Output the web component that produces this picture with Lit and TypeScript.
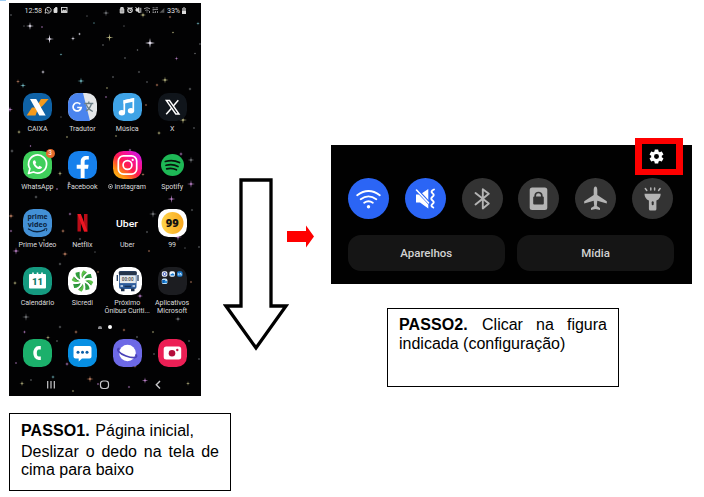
import { LitElement, html, svg, css, nothing } from "lit";
import { customElement, property } from "lit/decorators.js";

const tile = (fill: string) => svg`<rect width="29" height="28" rx="10.5" fill=${fill}></rect>`;

const icons: Record<string, unknown> = {
  caixa: svg`${tile("#0f62a6")}
    <path d="M18 6h7.600000L20 12.500000L14.500000 17L12.500000 22.500000H3.700000L9 14.500000H13z" fill="#f59a1c"/>
    <path d="M7 6h6.200000L16.200000 11L17.500000 13.500000L22.700000 22.500000H16.300000L12.500000 15.500000L11.200000 13.500000z" fill="#fff"/>`,
  translate: svg`${tile("#e4e6e8")}
    <path d="M10.500000 0H15L22 28H10.500000A10.500000 10.500000 0 0 1 0 17.500000v-7A10.500000 10.500000 0 0 1 10.500000 0z" fill="#4a84ee"/>
    <path d="M12.300000 11.200000A4.100000 4.100000 0 1 0 13.200000 14.500000H9.200000" fill="none" stroke="#fff" stroke-width="1.700000"/>
    <path d="M16.300000 10.500000h9M20.800000 8.500000v2M23.500000 10.500000c-.8 3.500000-3 6-5.500000 7.500000M18.300000 11.500000c1 3 3.500000 5.500000 6.500000 7" fill="none" stroke="#6d7f86" stroke-width="1.300000"/>`,
  music: svg`${tile("#3fa3e6")}
    <path d="M11.300000 19.500000V8l9-2v11.500000" fill="none" stroke="#fff" stroke-width="1.700000"/>
    <path d="M10.500000 7.300000L21.100000 5v3.500000L10.500000 10.800000z" fill="#fff"/>
    <ellipse cx="8.900000" cy="19.800000" rx="3.200000" ry="2.700000" fill="#fff"/>
    <ellipse cx="18" cy="17.800000" rx="3.200000" ry="2.700000" fill="#fff"/>`,
  x: svg`${tile("#10151b")}
    <path d="M8.300000 7.500000h3.200000l9.500000 13.500000h-3.200000z" fill="#10151b" stroke="#fff" stroke-width="1.400000"/>
    <path d="M20.300000 7.300000l-5 5.700000M13.500000 15.300000l-5.300000 6" stroke="#fff" stroke-width="1.500000"/>`,
  whatsapp: svg`${tile("#3fcf5b")}
    <path d="M5.500000 22.500000l1.400000-4.800000A9 9 0 1 1 10.500000 21z" fill="none" stroke="#fff" stroke-width="1.700000" stroke-linejoin="round"/>
    <path d="M11 9.200000c-2.200000 1.500000-.8 4.500000 1 6.500000s5 3.500000 6.800000 1.300000c.5-.9.2-1.200000-2.300000-2.300000l-1.300000 1.200000c-1.500000-.7-2.300000-1.600000-2.900000-2.800000l.9-1.300000-1-2.400000z" fill="#fff"/>`,
  facebook: svg`${tile("#1680ec")}
    <path d="M12.700000 27V17.700000H8.700000v-4h4v-3c0-3.800000 2.400000-5.600000 5.500000-5.600000h2.600000v3.500000h-2c-1.700000 0-2.200000.8-2.200000 2.200000v2.900000h4l-.6 4h-3.400000V27z" fill="#fff"/>`,
  instagram: svg`<defs>
      <linearGradient id="ig" x1="0" y1="1" x2=".9" y2="0">
        <stop offset="0" stop-color="#ffd21c"/><stop offset=".25" stop-color="#ff8a12"/>
        <stop offset=".5" stop-color="#ff1c4c"/><stop offset=".75" stop-color="#f510a0"/>
        <stop offset="1" stop-color="#c21df0"/>
      </linearGradient></defs>${tile("url(#ig)")}
    <rect x="5.300000" y="4.900000" width="18.400000" height="18.200000" rx="5.200000" fill="none" stroke="#fff" stroke-width="1.700000"/>
    <circle cx="14.500000" cy="14" r="4.400000" fill="none" stroke="#fff" stroke-width="1.700000"/>
    <circle cx="19.700000" cy="8.900000" r="1.100000" fill="#fff"/>`,
  spotify: svg`<ellipse cx="14.500000" cy="14" rx="11.500000" ry="11" fill="#1eb856"/>
    <path d="M7.300000 10.500000c4.500000-1.400000 10-1 14.200000 1.100000M8 14.300000c4-1.100000 8.500000-.7 12 1.200000M8.700000 17.800000c3.300000-.8 6.800000-.5 9.700000 1" fill="none" stroke="#07140b" stroke-width="1.700000" stroke-linecap="round"/>`,
  prime: svg`${tile("#4390d6")}
    <text x="14.500000" y="10.200000" class="prime" textLength="20" lengthAdjust="spacingAndGlyphs">prime</text>
    <text x="14.500000" y="17.500000" class="prime" textLength="19.500000" lengthAdjust="spacingAndGlyphs">video</text>
    <path d="M5.500000 20c5 3.300000 11 3.300000 16 .8" fill="none" stroke="#0b2340" stroke-width="1.300000" stroke-linecap="round"/>
    <path d="M21.300000 19.700000h2.700000l-.7 2.500000" fill="none" stroke="#0b2340" stroke-width=".8"/>`,
  netflix: svg`<path d="M9.500000 5h3.400000v17.500000H9.500000zM16 5h3.500000v17.500000H16z" fill="#b90d18"/>
    <path d="M9.500000 5h3.400000l6.600000 17.500000H16z" fill="#ee1622"/>`,
  uber: svg`<text x="14" y="17.500000" class="uber" textLength="22" lengthAdjust="spacingAndGlyphs">Uber</text>`,
  n99: svg`${tile("#fff")}
    <defs><linearGradient id="g99"><stop offset="0" stop-color="#ffd44a"/><stop offset="1" stop-color="#f8a820"/></linearGradient></defs>
    <circle cx="14.500000" cy="14" r="11" fill="url(#g99)"/>
    <text x="14.300000" y="17.700000" class="n99">99</text>`,
  calendar: svg`${tile("#159a80")}
    <path d="M7 7h2.200000V5.500000h1.600000V7h2.900000V5.500000h1.600000V7h2.900000V5.500000h1.600000V7H22q1 0 1 1v12.500000q0 1-1 1H7q-1 0-1-1V8q0-1 1-1z" fill="#fff"/>
    <text x="14.500000" y="17.900000" class="cal">11</text>`,
  sicredi: svg`${tile("#fff")}
    ${[0, 45, 90, 135, 180, 225, 270, 315].map(
      (a, i) => svg`<path transform="rotate(${a} 14.5 14)" d="M14.200000 11.200000C12.800000 8.500000 13.300000 5 15.500000 3.200000L19 5.300000C17 6.300000 15.500000 8.500000 14.200000 11.200000z" fill=${i % 2 ? "#2f9e3c" : "#5cc24a"}/>
      <path transform="rotate(${a} 14.5 14)" d="M14.200000 11.200000C14.700000 8.300000 16.500000 6.200000 19 5.300000L18 6.300000C16.500000 7.300000 15 9 14.200000 11.200000z" fill="#12612f"/>`
    )}`,
  bus: svg`${tile("#fff")}
    <rect x="6" y="4" width="17.500000" height="18" rx="2" fill="#2f5d9c"/>
    <rect x="5.800000" y="4.300000" width="18" height="3.600000" rx="1.200000" fill="#26354a"/>
    <rect x="6.800000" y="8.300000" width="16" height="7.800000" fill="#e8ebec"/>
    <path d="M4.300000 8v6M25 8v6" stroke="#203858" stroke-width="1.300000"/>
    <path d="M8 21.500000h3.500000v2.700000H8zM18 21.500000h3.500000v2.700000H18z" fill="#20324d"/>
    <path d="M7.500000 19h2.500000M19.500000 19H22" stroke="#dbe6f2" stroke-width="1.300000"/>
    <path d="M11.500000 19.500000h6.500000" stroke="#173156" stroke-width="1.500000"/>
    <text x="14.700000" y="13.800000" class="bus">00:00</text>`,
  folder: svg`${tile("#1c1d21")}
    <rect x="3.800000" y="4.300000" width="5.600000" height="5.400000" rx="1.800000" fill="#eef3fb"/>
    <circle cx="6.600000" cy="7" r="1.500000" fill="none" stroke="#3a55b8" stroke-width="1"/>
    <rect x="11.400000" y="4.300000" width="5.600000" height="5.400000" rx="1.800000" fill="#eef6fd"/>
    <path d="M12.300000 8.500000q0-1.700000 1.500000-1.700000.7-1.300000 1.900000 0 1 .5.6 1.700000z" fill="#1678d0"/>
    <rect x="19" y="4.300000" width="5.600000" height="5.400000" rx="1.600000" fill="#1779cc"/>
    <path d="M20.400000 6.200000v2.200000M22 8.400000V6.300000q1.500000-.3 1.400000 2.100000" stroke="#fff" stroke-width=".7" fill="none"/>
    <rect x="3.800000" y="11.600000" width="5.600000" height="5.400000" rx="1.600000" fill="#bfe0fa"/>
    <rect x="4.200000" y="13" width="3" height="3" fill="#0c62b8"/><rect x="6.500000" y="14" width="2.500000" height="2" fill="#2a8fe0"/>`,
  phone: svg`${tile("#1bb06b")}
    <path d="M17.800000 8.700000h-2c-5 0-5 10.600000 0 10.600000h2" fill="none" stroke="#fff" stroke-width="3.500000" stroke-linejoin="round"/>`,
  messages: svg`${tile("#078fe3")}
    <path d="M7.500000 7h14q2 0 2 2v8.500000q0 2-2 2H14l-3.300000 3v-3H7.500000q-2 0-2-2V9q0-2 2-2z" fill="#fff"/>
    <g fill="#0a5ea8"><circle cx="10" cy="13.200000" r="1.500000"/><circle cx="14.500000" cy="13.200000" r="1.500000"/><circle cx="19" cy="13.200000" r="1.500000"/></g>`,
  internet: svg`${tile("#6d69e6")}
    <circle cx="14.500000" cy="14" r="8.300000" fill="#fff"/>
    <path d="M6.500000 9.500000C2.500000 10 6 14.500000 13 17s13 2 9.500000-1.500000" fill="none" stroke="#4a43b8" stroke-width="1.800000"/>`,
  camera: svg`${tile("#ec1f55")}
    <rect x="5.700000" y="7.500000" width="17.500000" height="13" rx="2.500000" fill="#fff"/>
    <circle cx="14" cy="14.200000" r="3.300000" fill="#b40d3b"/><circle cx="19.300000" cy="11" r="1.200000" fill="#c81a48"/>`,
};

interface App { icon: string; label: string[]; badge?: string; check?: boolean; }

const apps: App[] = [
  { icon: "caixa", label: ["CAIXA"] },
  { icon: "translate", label: ["Tradutor"] },
  { icon: "music", label: ["Música"] },
  { icon: "x", label: ["X"] },
  { icon: "whatsapp", label: ["WhatsApp"], badge: "3" },
  { icon: "facebook", label: ["Facebook"] },
  { icon: "instagram", label: ["Instagram"], check: true },
  { icon: "spotify", label: ["Spotify"] },
  { icon: "prime", label: ["Prime Video"] },
  { icon: "netflix", label: ["Netflix"] },
  { icon: "uber", label: ["Uber"] },
  { icon: "n99", label: ["99"] },
  { icon: "calendar", label: ["Calendário"] },
  { icon: "sicredi", label: ["Sicredi"] },
  { icon: "bus", label: ["Próximo", "Ônibus Curiti..."] },
  { icon: "folder", label: ["Aplicativos", "Microsoft"] },
];
const dock = ["phone", "messages", "internet", "camera"];

const W = "#e8e4f2", G = "#77797d", Y = "#b5b27f", C = "#6fb4bd", P = "#b77fc4", O = "#c08062";
const stars: [number, number, number, string][] = [
  [30, 26, 4, W], [49.5, 39, 4.5, W], [73, 38.5, 2.6, W], [79.5, 34, 1.8, W], [109.5, 37.5, 4, Y], [150, 43, 5, W],
  [106, 13, 3.5, G], [143, 15, 3, Y], [170, 17, 1.6, O], [198, 23.5, 2, C], [94, 23, 1, C], [42, 27, 1.2, P], [61, 54.5, 1.5, C],
  [43, 72, 2.4, W], [18, 81.5, 2.4, O], [23, 85.5, 3, C], [81, 81, 3.6, C], [103, 45, 1.3, G], [125, 58, 1.3, G], [137.5, 50, 1.3, G],
  [176.5, 58.5, 2.2, P], [165, 80, 3.6, Y], [139, 72, 1.5, G], [147, 82, 1.2, G], [157, 85, 2, O], [173, 32.5, 1.3, Y], [195, 53.5, 1.2, G],
  [11, 15, 1.2, G], [87, 16, 1, G], [190, 89, 2, G], [124, 26, 1, G], [113, 77, 1.4, G], [200, 44, 1.4, G], [24, 26, 1, G],
  [106, 97, 1.3, P], [61, 117, 1, G], [10, 109.5, 3, P], [183, 120, 4, Y], [19, 132, 2.6, Y], [146, 105, 1.4, O], [67, 137, 1.4, Y],
  [159, 133, 2.6, Y], [194, 128, 1.3, G], [116, 136, 1.3, Y], [107, 88, 1.3, Y], [12, 151, 2.4, G], [30.5, 146, 1.2, P],
  [60, 173.5, 2.8, Y], [191, 160, 3.4, G], [181, 154, 2.4, P], [191, 184, 4, P], [171.5, 199, 4, P], [143, 174.5, 2, O], [130, 150, 1.8, P],
  [36, 197, 2.2, G], [57, 189, 1.3, P], [69, 183, 2, W], [11, 216, 3, O], [70, 214, 2, P], [11, 231, 1.7, P], [63, 231, 2.6, O],
  [16, 251, 3.8, P], [65, 254, 3, O], [153, 214, 4, G], [178, 237, 4, P], [147, 232, 1.4, G], [192, 210, 1.5, G], [199, 247, 1.4, G],
  [95, 252, 1, G], [185, 248, 1, G], [149, 251, 1.4, O], [15, 283, 2.6, Y], [60, 264, 2, G], [26, 317, 4, G], [98, 272, 1.4, O],
  [140, 296, 3, P], [178, 319, 3, G], [60, 327, 2, G], [191, 282, 1.4, O], [24.5, 332, 2, P], [48, 337.5, 2.6, Y], [76, 332, 2.4, O],
  [57, 341, 1.3, G], [124, 330, 2, O], [153, 332, 1.4, Y], [137, 337, 1.4, G], [189, 341, 1.4, G], [154, 354, 1.3, G], [67, 364, 2.4, P],
  [135, 366, 2.4, O], [16, 363, 1.2, P], [22, 383.5, 2.8, Y], [53, 377, 2.2, C], [90, 379, 3.6, O], [129, 387, 1.5, P], [145, 380.5, 3.2, P],
  [188, 383.5, 2.4, Y], [73, 391, 1.5, Y], [31, 380, 1.3, G], [98, 384, 1.4, P], [199, 359, 1.3, G], [44, 240, 1.6, Y], [80, 239, 1.5, G],
];

@customElement("phone-home")
export class PhoneHome extends LitElement {
  static styles = css`
    :host { display: flex; flex-direction: column; position: relative; background: #020203; height: 393px; overflow: hidden;
      font-family: Roboto, sans-serif; color: #dcdcde; }
    .sky { position: absolute; inset: 0; width: 192px; height: 393px; }
    .status { position: relative; display: flex; justify-content: space-between; align-items: center; height: 14px;
      padding: 0 15px 0 15.5px; font-size: 7.200000px; letter-spacing: -0.1px; }
    .status div { display: flex; align-items: center; gap: 2px; }
    .status svg { display: block; }
    .apps { position: relative; display: grid; grid-template-columns: repeat(4, 44.9px); grid-auto-rows: 58px; margin: 76px 0 0 6px; }
    .app { display: flex; flex-direction: column; align-items: center; position: relative; }
    .icon { width: 29px; height: 28px; display: block; flex: none; overflow: visible; }
    .label { margin-top: 3.5px; font-size: 7.1px; line-height: 8px; text-align: center; white-space: nowrap; letter-spacing: -0.05px; }
    .badge { position: absolute; left: 30.5px; top: -2.5px; width: 9px; height: 9px; border-radius: 50%; background: #e66a2c;
      color: #fff; font-size: 6.5px; line-height: 9px; text-align: center; }
    .check { width: 5px; height: 5px; margin-right: 1px; }
    .dots { position: relative; display: flex; gap: 6px; align-items: center; height: 6px; margin: -1px 0 0 89px; }
    .home { width: 4px; height: 3px; background: #8b8b8f; border-radius: 2px 2px 0 0; }
    .dot { width: 4px; height: 4px; border-radius: 50%; background: #fff; }
    .dock { position: relative; display: grid; grid-template-columns: repeat(4, 44.9px); justify-items: center; margin: 9px 0 0 6px; }
    .nav { position: relative; display: flex; margin-top: 13px; padding-left: 37px; }
    .prime { font: 700 7.6px/1 "Open Sans", sans-serif; text-anchor: middle; fill: #0b2340; }
    .uber { font: 500 9.800000px Roboto, sans-serif; text-anchor: middle; fill: #fff; }
    .n99 { font: italic 900 11px "Open Sans", Roboto, sans-serif; font-style: normal; text-anchor: middle; fill: #111; }
    .cal { font: 900 9.500000px Roboto, sans-serif; text-anchor: middle; fill: #137a67; }
    .bus { font: 700 4.600000px Roboto, sans-serif; text-anchor: middle; fill: #555; }
  `;

  private icon(name: string) {
    return html`<svg class="icon" viewBox="0 0 29 28">${icons[name]}</svg>`;
  }

  render() {
    return html`
      <svg class="sky" viewBox="9 3 192 393">
        ${stars.map(([x, y, r, c]) => {
          const k = r * 0.13;
          return svg`<path d="M${x} ${y - r}L${x + k} ${y - k}L${x + r} ${y}L${x + k} ${y + k}L${x} ${y + r}L${x - k} ${y + k}L${x - r} ${y}L${x - k} ${y - k}Z" fill=${c}/>
            <circle cx=${x} cy=${y} r=${0.45 + r * 0.16} fill=${c} opacity=".6"/>`;
        })}
      </svg>
      <div class="status">
        <div>
          <span>12:58</span>
          <svg width="24" height="8" viewBox="0 0 24 8" fill="none" stroke="#ddd" stroke-width=".9">
            <path d="M1 7.200000l.6-1.800000A2.900000 2.900000 0 1 1 2.600000 6.600000z"/><path d="M3 2.800000c0 1.500000 1 2.500000 2.500000 2.400000"/>
            <path d="M10 3.200000L11.500000 1.500000H13V6.500000H10z" fill="#ddd"/>
            <rect x="17.500000" y="1.500000" width="5.500000" height="5"/><path d="M18 5.800000l1.500000-2 1 1 1-.8 1.200000 1.800000z" fill="#ddd"/>
          </svg>
        </div>
        <div>
          <svg width="46" height="8" viewBox="0 0 46 8" fill="none" stroke="#ddd" stroke-width=".9">
            <path d="M1.200000 3h3.600000v4H1.200000zM1.800000 3V1.500000h2.400000V3" fill="#aaa"/>
            <circle cx="11" cy="4.300000" r="2.200000" stroke-width="1.100000"/><path d="M8.500000 2l1-1M13.500000 2l-1-1M11 3v1.500000h1"/>
            <path d="M17 3h1.200000L20 1.500000v5L18.200000 5H17z" fill="#ddd"/><path d="M16.500000 1l4.500000 6M21.800000 1.800000v5"/>
            <path d="M25 2.800000q3-2.200000 6 0M26.300000 4.500000q1.600000-1.200000 3.200000 0M28 5.500000v1M30.500000 5v2" stroke="#a5a5a8"/>
            <path d="M33.500000 1.800000h2M36.500000 1.800000h2.500000M33.500000 3.500000h5.500000M33.500000 5h1.500000M33.500000 6.500000h2M36.500000 5v2M38.500000 5v2" stroke="#b5b5b8" stroke-width=".7"/>
            <path d="M40.500000 6.800000h4.800000V2z" fill="#555" stroke="none"/>
          </svg>
          <span>33%</span>
          <svg width="4" height="7" viewBox="0 0 4 7"><path d="M1.200000 0h1.600000v1H4v2.500000H0V1h1.200000z" fill="#888"/><path d="M0 3.500000h4V7H0z" fill="#ddd"/></svg>
        </div>
      </div>
      <div class="apps">
        ${apps.map((a) => html`<div class="app">
          ${this.icon(a.icon)}
          ${a.badge ? html`<span class="badge">${a.badge}</span>` : nothing}
          <div class="label">${a.check
            ? html`<svg class="check" viewBox="0 0 6 6"><circle cx="3" cy="3" r="2.500000" fill="none" stroke="#ddd" stroke-width=".8"/><path d="M1.700000 2.500000L3 4.500000l1.300000-2z" fill="#ddd"/></svg>`
            : nothing}${a.label.map((l, i) => html`${i ? html`<br>` : nothing}${l}`)}</div>
        </div>`)}
      </div>
      <div class="dots"><i class="home"></i><i class="dot"></i></div>
      <div class="dock">${dock.map((d) => this.icon(d))}</div>
      <div class="nav">
        <svg width="118" height="12" viewBox="0 0 118 12" fill="none" stroke="#c8c8cb" stroke-width="1.200000">
          <path d="M1.700000 1v7.500000M5 1v7.500000M8.300000 1v7.500000" />
          <rect x="54.500000" y="1" width="8" height="7.500000" rx="2.700000"/>
          <path d="M114 1l-3.700000 3.800000 3.700000 3.800000" stroke-width="1.400000"/>
        </svg>
      </div>`;
  }
}

const toggles: { on?: boolean; glyph: unknown }[] = [
  { on: true, glyph: svg`<g fill="none" stroke="#fff" stroke-width="1.900000" stroke-linecap="round"><path d="M9.200000 17.200000q11.300000-8.500000 22.600000 0M12.700000 21.200000q7.800000-5.600000 15.600000 0M16.200000 24.700000q4.300000-2.800000 8.600000 0"/></g><circle cx="20.500000" cy="28.800000" r="1.700000" fill="#fff"/>` },
  { on: true, glyph: svg`<path d="M11 16.500000h4L23.300000 11v19.500000L15 24.500000h-4z" fill="#fff"/><path d="M11.300000 11.300000L24.500000 25.500000" stroke="#2b65f5" stroke-width="3.300000"/><path d="M11.500000 12L23.500000 24.800000" stroke="#fff" stroke-width="1.600000" stroke-linecap="round"/><path d="M29 11.500000q-4 1.700000-1.500000 3.700000 2.500000 1.700000 0 3.500000-2.500000 2 0 3.700000 2.500000 1.800000 0 3.500000-2.500000 2 .8 3.600000" fill="none" stroke="#fff" stroke-width="1.900000" stroke-linecap="round"/>` },
  { glyph: svg`<path d="M13.500000 15l13.300000 10.500000-6 5V11.200000l6 4.500000L13.500000 26.500000" fill="none" stroke="#b4b4b4" stroke-width="1.900000" stroke-linejoin="round" stroke-linecap="round"/>` },
  { glyph: svg`<rect x="11.700000" y="9.500000" width="17.600000" height="22.500000" rx="2.500000" fill="#b4b4b4"/><rect x="15.200000" y="18.500000" width="10.600000" height="8" rx="1" fill="#333"/><path d="M17.200000 19v-1.200000a3.300000 3.300000 0 0 1 6.600000 0V19" fill="none" stroke="#333" stroke-width="1.700000"/>` },
  { glyph: svg`<path d="M20.500000 8.500000c1.200000 0 1.800000 1.800000 1.800000 3.500000v5l9.500000 6.300000v2.200000l-9.500000-2.700000-.5 5.200000 3.200000 2v2l-4.500000-1-4.500000 1v-2l3.200000-2-.5-5.200000-9.500000 2.700000v-2.200000l9.500000-6.300000v-5c0-1.700000.6-3.500000 1.800000-3.500000z" fill="#b4b4b4"/>` },
  { glyph: svg`<path d="M12.500000 15.700000h16.200000q0 4.800000-4.300000 6.800000V31q0 1.500000-1.500000 1.500000h-4.500000q-1.500000 0-1.500000-1.500000v-8.500000q-4.400000-2-4.400000-6.800000z" fill="#b4b4b4"/><rect x="19.700000" y="23.300000" width="2" height="4" rx="1" fill="#333"/><path d="M14.800000 12.500000l-1.500000-2M18.800000 12v-2M22.600000 12v-2M26.600000 12.500000l1.500000-2" stroke="#b4b4b4" stroke-width="1.500000" stroke-linecap="round"/>` },
];

@customElement("quick-panel")
export class QuickPanel extends LitElement {
  static styles = css`
    :host { display: block; position: relative; height: 139px; background: #010101; font-family: Roboto, sans-serif; }
    .toggles { display: flex; justify-content: space-between; padding: 32.500000px 19px 0 17px; }
    .toggle { width: 41px; height: 41px; border-radius: 50%; background: #333; }
    .toggle.on { background: #2b65f5; }
    .toggle svg { display: block; width: 41px; height: 41px; }
    .buttons { display: grid; grid-template-columns: 156.500000px 157px; gap: 12.500000px; padding: 16.500000px 0 0 17px; }
    .button { height: 36px; border-radius: 13px; background: #151515; color: #d2d2d2; font-size: 11.500000px; font-weight: 500;
      line-height: 37px; text-align: center; }
    .mark { position: absolute; left: 304px; top: -7px; width: 48px; height: 37px; box-sizing: border-box; border: 6.500000px solid #fe0000; background: #000;
      border-left-width: 7px; border-right-width: 7px; }
    .gear { position: absolute; left: 317px; top: 3px; width: 17px; height: 17px; }
  `;
  render() {
    return html`
      <div class="toggles">${toggles.map((t) => html`<div class="toggle ${t.on ? "on" : ""}"><svg viewBox="0 0 41 41">${t.glyph}</svg></div>`)}</div>
      <div class="buttons"><div class="button">Aparelhos</div><div class="button">Mídia</div></div>
      <div class="mark"></div>
      <svg class="gear" viewBox="0 0 24 24"><path fill="#fff" fill-rule="evenodd" d="M19.430000 12.980000c.04-.32.07-.64.07-.98s-.03-.66-.07-.98l2.110000-1.650000c.19-.15.24-.42.12-.64l-2-3.460000c-.12-.22-.39-.3-.61-.22l-2.490000 1c-.52-.4-1.080000-.73-1.690000-.98l-.38-2.650000A.49.49 0 0 0 14 2h-4c-.25 0-.46.18-.49.42l-.38 2.650000c-.61.25-1.170000.59-1.690000.98l-2.490000-1c-.23-.09-.49 0-.61.22l-2 3.460000c-.13.22-.07.49.12.64l2.110000 1.650000c-.04.32-.07.65-.07.98s.03.66.07.98l-2.110000 1.650000c-.19.15-.24.42-.12.64l2 3.460000c.12.22.39.3.61.22l2.490000-1c.52.4 1.080000.73 1.690000.98l.38 2.650000c.03.24.24.42.49.42h4c.25 0 .46-.18.49-.42l.38-2.650000c.61-.25 1.170000-.59 1.690000-.98l2.490000 1c.23.09.49 0 .61-.22l2-3.460000c.12-.22.07-.49-.12-.64zM12 15.500000a3.500000 3.500000 0 1 1 0-7 3.500000 3.500000 0 0 1 0 7z"/></svg>`;
  }
}

@customElement("step-note")
export class StepNote extends LitElement {
  static styles = css`
    :host { display: block; box-sizing: border-box; border: 1px solid #000; background: #fff; color: #000;
      font: 16px/18.5px "Liberation Sans", Arial, sans-serif; text-align: justify; }
    b { letter-spacing: 0.1px; margin-right: 1px; }
  `;
  @property() step = "";
  render() {
    return html`<b>${this.step}</b> <slot></slot>`;
  }
}

@customElement("app-root")
export class AppRoot extends LitElement {
  static styles = css`
    :host { display: block; position: relative; width: 704px; height: 497px; background: #fff; overflow: hidden; }
    .corner { position: absolute; left: 0; top: 0; width: 6px; height: 1px; background: #9ccbf2; }
    .page { display: grid; grid-template-columns: 192px 22px 63px 45px 361px; grid-template-rows: 393px 78px; row-gap: 17px; padding: 3px 0 0 9px; }
    .down { grid-column: 3; margin-top: 174px; width: 67px; height: 176px; }
    .right { grid-column: 4; margin: 222px 0 0 0.500000px; width: 28px; height: 24px; }
    .second { grid-column: 5; padding-top: 142px; }
    .one { grid-area: 2 / 1 / 3 / 4; width: 222px; height: 78px; padding: 8px 11px 0; }
    .two { width: 232px; height: 79px; margin: 24px 0 0 56px; padding: 7px 11px 0; }
    .rest { display: block; padding-top: 2px; }
  `;
  render() {
    return html`
      <div class="corner"></div>
      <div class="page">
        <phone-home></phone-home>
        <svg class="down" viewBox="0 0 67 176"><path d="M18 3H48V129H63L33 171L3 129H18Z" fill="#fff" stroke="#000" stroke-width="3.300000"/></svg>
        <svg class="right" viewBox="0 0 28 24"><path d="M0 6H19V.5L27 11.500000L19 22.500000V17H0z" fill="#fe0000"/></svg>
        <div class="second">
          <quick-panel></quick-panel>
          <step-note class="two" step="PASSO2.">Clicar na figura indicada (configuração)</step-note>
        </div>
        <step-note class="one" step="PASSO1.">Página inicial,<span class="rest">Deslizar o dedo na tela de cima para baixo</span></step-note>
      </div>`;
  }
}
